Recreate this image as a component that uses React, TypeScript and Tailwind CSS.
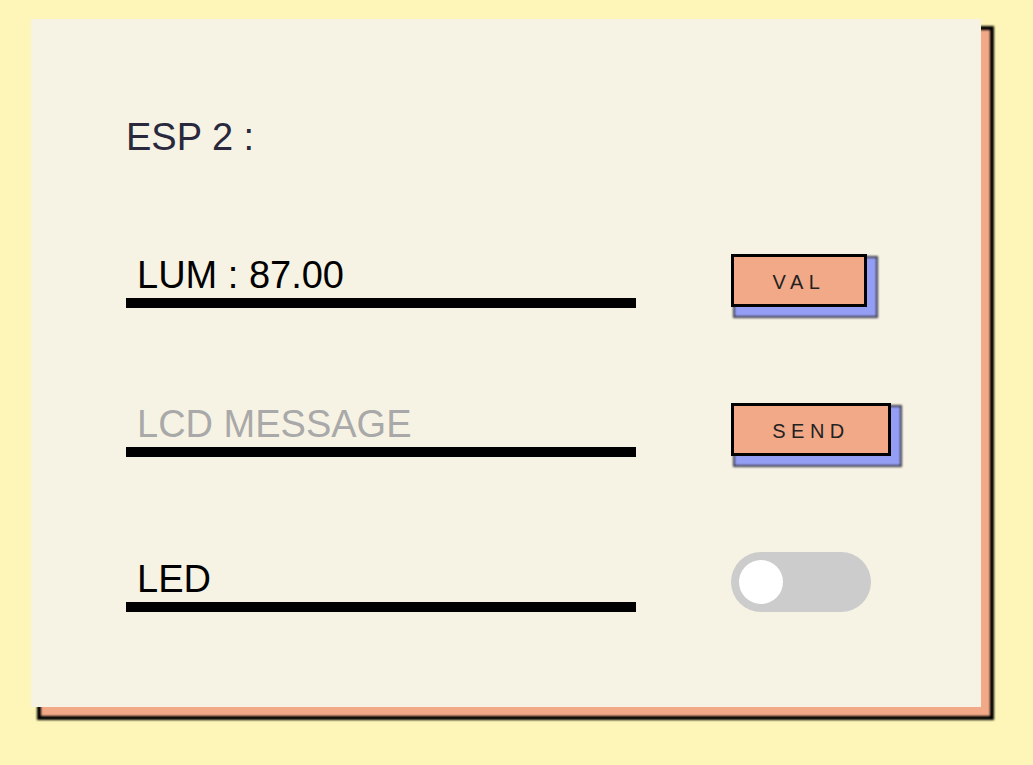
import React from "react";

function ShadowButton({ label, width }: { label: string; width: string }) {
  return (
    <div className="relative h-[53px]">
      <span className="absolute left-[2px] top-[2px] right-[-11px] bottom-[-11px] bg-[#959ef5] border-2 border-[#3c3c4c] blur-[0.8px]" />
      <button
        className={`relative ${width} h-[53px] border-[3px] border-black bg-[#f2a987] text-[20px] tracking-[5.5px] text-[#222] flex items-center justify-center pt-[3px]`}
        style={{ fontFamily: '"Liberation Sans", Arial, sans-serif' }}
      >
        {label}
      </button>
    </div>
  );
}

export default function App() {
  const font = { fontFamily: '"Liberation Sans", Arial, Helvetica, sans-serif' };
  return (
    <div className="w-[1033px] h-[765px] bg-[#fef5b8] overflow-hidden pt-[19px] pl-[31px]" style={font}>
      <div className="relative w-[950px] h-[688px]">
        <div className="absolute left-[6px] top-[7px] w-[957px] h-[694px] bg-[#f2a987] border-[4px] border-black blur-[0.8px]" />
        <div className="relative w-[950px] h-[688px] bg-[#f7f3e4] pt-[98px] pl-[95px]">
          <div className="text-[38px] leading-[40px] text-[#29283d]">ESP 2 :</div>

          <div className="mt-[95px] flex items-center">
            <input
              readOnly
              value="LUM : 87.00"
              className="w-[510px] h-[56px] border-b-[10px] border-black bg-transparent px-[11px] text-[38px] text-black outline-none"
              style={font}
            />
            <div className="ml-[95px]">
              <ShadowButton label="VAL" width="w-[136px]" />
            </div>
          </div>

          <div className="mt-[93px] flex items-center">
            <input
              placeholder="LCD MESSAGE"
              className="w-[510px] h-[56px] border-b-[10px] border-black bg-transparent px-[11px] text-[38px] text-black outline-none placeholder:text-[#a9a9a9]"
              style={font}
            />
            <div className="ml-[95px]">
              <ShadowButton label="SEND" width="w-[160px]" />
            </div>
          </div>

          <div className="mt-[95px] flex items-end">
            <input
              readOnly
              value="LED"
              className="w-[510px] h-[56px] border-b-[10px] border-black bg-transparent px-[11px] text-[38px] text-black outline-none"
              style={font}
            />
            <div className="ml-[95px] w-[140px] h-[60px] rounded-full bg-[#cccccc] flex items-center pl-[8px]">
              <div className="w-[44px] h-[44px] rounded-full bg-white" />
            </div>
          </div>
        </div>
      </div>
    </div>
  );
}
